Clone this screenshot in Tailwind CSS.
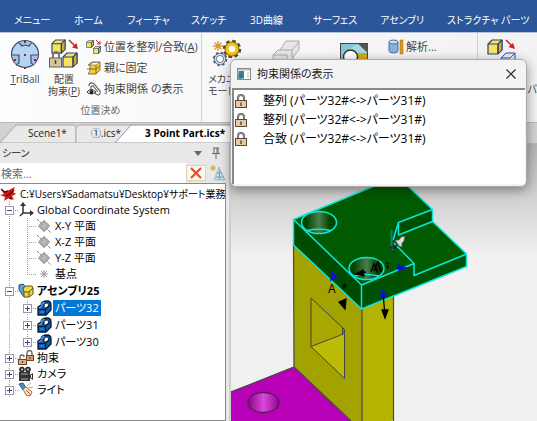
<!DOCTYPE html>
<html lang="ja" class="h-full">
<head>
  <meta charset="UTF-8" />
  <meta name="viewport" content="width=device-width, initial-scale=1.0" />
  <title>3 Point Part.ics</title>
  <script src="https://cdn.jsdelivr.net/npm/@tailwindcss/browser@4"></script>
</head>
<body class="relative flex h-screen flex-col overflow-hidden bg-[#f0f0f0] font-['Open_Sans','Noto_Sans_CJK_JP',sans-serif] text-[11px] leading-4 text-[#222] [font-feature-settings:'palt']">

  <!-- Shared icons -->
  <svg class="hidden">
    <symbol id="cube" viewBox="0 0 16 16">
      <path d="M1 5L5 1H15V11L11 15H1Z" fill="#f7e45c" stroke="#28407c" stroke-width="1.2" />
      <path d="M11 5L15 1V11L11 15Z" fill="#cfae22" stroke="#28407c" stroke-width="1" />
      <path d="M1 5H11V15M11 5L15 1" fill="none" stroke="#28407c" stroke-width="1.2" />
    </symbol>
    <symbol id="lock" viewBox="0 0 12 14">
      <path d="M3 7V4a3 3 0 0 1 6 0V7" fill="none" stroke="#5c5c5c" stroke-width="2" />
      <path d="M3 7V4a3 3 0 0 1 6 0V7" fill="none" stroke="#bbb" stroke-width=".6" />
      <rect x=".5" y="6.5" width="11" height="7" fill="#e8c9a0" stroke="#57493b" />
      <path d="M6 8.500V12" stroke="#4a3c2c" stroke-width="1.300" />
    </symbol>
    <symbol id="plane" viewBox="0 0 16 16">
      <path d="M1 1L15 15" stroke="#777" stroke-dasharray="3 1" />
      <path d="M8 2L14 8L8 14L2 8Z" fill="#a8a8a8" stroke="#b5b5b5" />
      <path d="M5 8H11M8 5V11" stroke="#c4c4c4" />
    </symbol>
    <symbol id="part" viewBox="0 0 16 16">
      <path d="M2 7L5 5C5 2 8 1 11 1C14 1 15 3 15 5V10L10 15H2Z" fill="#0f57a8" stroke="#061a33" stroke-width="1.300" />
      <path d="M8 6C8 4 9 3 11 3C12 3 12.500 4 12.500 6L10 8H8Z" fill="#fff" stroke="#061a33" />
      <path d="M3 8L6 6M5 5L8 2" fill="none" stroke="#59a7ee" stroke-width="1.500" />
      <path d="M2 9.500H9.500V15M9.500 9.500L15 5" fill="none" stroke="#061a33" />
      <path d="M4 12H8" stroke="#2f86d8" stroke-width="1.500" />
    </symbol>
    <symbol id="plus" viewBox="0 0 18 16">
      <path d="M9.500 0V16M13 8.500H18" stroke="#999" stroke-dasharray="1 1" />
      <rect x="5.500" y="4.500" width="8" height="8" fill="#fff" stroke="#999" />
      <path d="M7 8.500H12M9.500 6V11" stroke="#2b4b9b" />
    </symbol>
    <symbol id="minus" viewBox="0 0 18 16">
      <path d="M9.500 0V16M13 8.500H18" stroke="#999" stroke-dasharray="1 1" />
      <rect x="5.500" y="4.500" width="8" height="8" fill="#fff" stroke="#999" />
      <path d="M7 8.500H12" stroke="#2b4b9b" />
    </symbol>
    <symbol id="trunk" viewBox="0 0 18 16">
      <path d="M9.500 0V16" stroke="#999" stroke-dasharray="1 1" />
    </symbol>
    <symbol id="branch" viewBox="0 0 18 16">
      <path d="M9.500 0V16M9 8.500H18" stroke="#999" stroke-dasharray="1 1" />
    </symbol>
  </svg>

  <!-- Menu bar -->
  <nav class="grid h-8 shrink-0 grid-cols-[60fr_53fr_64fr_59fr_63fr_67fr_67fr_90fr] items-end whitespace-nowrap bg-[#2b579a] pb-1 pl-3.5 text-[10px] text-white">
    <a href="#">メニュー</a>
    <a href="#">ホーム</a>
    <a href="#">フィーチャ</a>
    <a href="#">スケッチ</a>
    <a href="#">3D曲線</a>
    <a href="#">サーフェス</a>
    <a href="#">アセンブリ</a>
    <a href="#">ストラクチャ パーツ</a>
  </nav>

  <!-- Ribbon -->
  <div class="flex h-[90px] shrink-0 border-t border-[#b9c3d6] bg-linear-to-r from-[#fdfdfd] to-[#f2f2f2] text-[#444]">
    <section class="flex w-[202px] shrink-0 flex-col border-r border-[#d0d0d0]">
      <div class="flex h-[69px] gap-1 pt-1">
        <button class="flex w-[42px] flex-col items-center pl-2 text-[10px]">
          <svg class="size-8 shrink-0" viewBox="0 0 32 32">
            <circle cx="16" cy="17" r="13.500" fill="#b5d3f2" stroke="#3f4f63" stroke-width="1.200" />
            <path d="M9 5L13 9L16 8L20 9L23 5M3 18H10V26L7 28M29 18H22V26L25 28" fill="#a0c2e8" stroke="#3f4f63" stroke-width="1.200" />
            <path d="M15 4h2v2h-2zM15 17h2v2h-2zM5 22h2v2h-2zM25 22h2v2h-2zM15 30h2v2h-2z" fill="#b01828" />
          </svg>
          <span class="pt-0.5"><u>T</u>riBall</span>
        </button>
        <button class="flex w-9 flex-col items-center text-[10px] leading-3">
          <svg class="size-8 shrink-0" viewBox="0 0 32 32">
            <use href="#cube" x="3" y="2" width="15" height="15" />
            <use href="#cube" x="14" y="15" width="16" height="16" />
            <path d="M21 3L28 10" stroke="#d02020" stroke-width="1.500" />
            <path d="M30 12L24 10.500L28.500 6Z" fill="#d02020" />
            <path d="M5 22V18a3 3 0 0 1 6 0v4" fill="none" stroke="#777" stroke-width="2" />
            <rect x="1.500" y="21" width="12" height="9" fill="#d6c5a0" stroke="#6b5f48" />
            <path d="M7.500 23V27" stroke="#51452f" stroke-width="1.500" />
          </svg>
          <span class="whitespace-nowrap pt-1">配置</span>
          <span class="whitespace-nowrap">拘束(<u>P</u>)</span>
        </button>
        <div class="flex flex-col gap-[5px] whitespace-nowrap pt-0.5 text-[11px]">
          <button class="flex items-center gap-0.5">
            <svg class="size-4" viewBox="0 0 16 16">
              <use href="#cube" x="0" y="1" width="8" height="8" />
              <use href="#cube" x="7" y="7" width="8" height="8" />
              <path d="M10 1L14 5M14 2V5H11" fill="none" stroke="#d02020" />
            </svg>
            <span>位置を整列/合致(<u>A</u>)</span>
          </button>
          <button class="flex items-center gap-0.5">
            <svg class="size-4" viewBox="0 0 16 16">
              <path d="M2 5L6 2H14V10L10 14H2L4 11V5Z" fill="#f4cf35" stroke="#8d7434" />
              <path d="M4 5L7 2.500H14L10 5Z" fill="#fff" stroke="#777" stroke-width=".7" />
              <path d="M1 9H10M10 5V14M10 9L14 6" fill="none" stroke="#8a6510" />
            </svg>
            <span>親に固定</span>
          </button>
          <button class="flex items-center gap-0.5">
            <svg class="size-4" viewBox="0 0 16 16">
              <path d="M3 5C3 1 7 1 9 4L14 10C15 13 13 15 10 13L5 8C4 5 7 4 8 6L12 11" fill="none" stroke="#666" stroke-width="1.200" />
              <path d="M1 11Q5 6 10 11Q5 15 1 11Z" fill="#fff" stroke="#333" />
              <circle cx="5.500" cy="11" r="2" fill="#222" />
            </svg>
            <span>拘束関係 の表示</span>
          </button>
        </div>
      </div>
      <h2 class="text-center text-[10px] text-[#666]">位置決め</h2>
    </section>

    <section class="flex w-[276px] shrink-0 items-start border-r border-[#d0d0d0] pt-1">
      <button class="flex w-[58px] flex-col whitespace-nowrap pl-1.5 text-left text-[10px] leading-3">
        <svg class="ml-1 size-8 shrink-0" viewBox="0 0 32 32">
          <path d="M6 4V14M1 9H11M2.500 5.500L9.500 12.500M9.500 5.500L2.500 12.500" stroke="#dc9928" stroke-width="1.300" />
          <circle cx="20" cy="12" r="7.500" fill="none" stroke="#5f4d13" stroke-width="3.500" stroke-dasharray="3.300 2.590" />
          <circle cx="20" cy="12" r="5" fill="#fff" stroke="#5f4d13" stroke-width="5" />
          <circle cx="20" cy="12" r="5" fill="#fff" stroke="#f0c21a" stroke-width="3.500" />
          <circle cx="8" cy="22" r="6" fill="none" stroke="#566178" stroke-width="2.500" stroke-dasharray="2.500 2.200" />
          <circle cx="8" cy="22" r="4.500" fill="#fff" stroke="#566178" stroke-width="3" />
          <circle cx="8" cy="22" r="4.500" fill="none" stroke="#d4ddea" stroke-width="1.500" />
        </svg>
        <span class="pt-1">メカニ</span>
        <span>モード</span>
      </button>
      <button class="w-[76px] pl-3 text-left" aria-label="シェル">
        <svg class="size-8" viewBox="0 0 32 32">
          <path d="M1 18L6 13H8L14 4H27V13L21 20V25H1Z" fill="#e6e6e6" stroke="#aaa" />
          <path d="M8 13H20L27 5M20 13V20M1 18H15V25" fill="none" stroke="#aaa" />
        </svg>
      </button>
      <button class="w-12 pl-1 text-left" aria-label="断面">
        <svg class="h-8 w-7" viewBox="0 0 28 32">
          <rect x=".500" y="6.500" width="27" height="25" fill="#86c5d5" stroke="#444" />
          <path d="M18 7H28V16Z" fill="#555" />
          <path d="M18 16H27V31H18Z" fill="#d3a91e" />
          <path d="M1 16L18 7L27 16" fill="#a8d8e2" />
          <circle cx="10.500" cy="20" r="7" fill="#fff" stroke="#333" stroke-width="1.500" />
        </svg>
      </button>
      <button class="flex items-center gap-0.5 pl-1 pt-0.5 text-[11px]">
        <svg class="size-4" viewBox="0 0 16 16">
          <path d="M1 3V12a4.500 2 0 0 0 9 0V3" fill="#86b2dc" stroke="#4e6f94" />
          <ellipse cx="5.500" cy="3" rx="4.500" ry="2" fill="#c9def2" stroke="#4e6f94" />
          <rect x="12" y="1" width="3" height="14" fill="#d99a20" stroke="#9b6a10" stroke-width=".5" />
        </svg>
        <span>解析...</span>
      </button>
    </section>

    <section class="min-w-0 flex-1 overflow-hidden pl-2 pt-1">
      <button class="flex w-full flex-col whitespace-nowrap text-[10px] leading-3">
        <svg class="size-8 shrink-0" viewBox="0 0 32 32">
          <use href="#cube" x="1" y="2" width="16" height="16" />
          <path d="M15 21L20 16H29V26L25 30H15Z M15 21H24L29 16" fill="#e4e8ff" stroke="#354ba0" />
          <path d="M20 3L26 9" stroke="#d02020" stroke-width="1.500" />
          <path d="M29 12L22.500 10L27 6Z" fill="#d02020" />
        </svg>
        <span class="self-end pt-3.5">パ</span>
      </button>
    </section>
  </div>

  <!-- Document tabs -->
  <div class="relative flex h-[21px] shrink-0 border-t border-[#b8b8b8] bg-[#d2d2d2]">
    <svg class="absolute left-0 top-0 h-5 w-60" viewBox="0 0 240 20">
      <path d="M0 20L16 2H74L76 4V20Z" fill="#e9e9e9" stroke="#aaa" />
      <path d="M76 20V5L79 2H133L116 20Z" fill="#e9e9e9" stroke="#aaa" />
      <path d="M115 20L131 2H240V20Z" fill="#fff" stroke="#999" />
    </svg>
    <div class="relative flex items-center gap-6 pl-7 text-[10px]">
      <a href="#">Scene1*</a>
      <a href="#">①.ics*</a>
      <a href="#" class="font-bold text-black">3 Point Part.ics*</a>
    </div>
  </div>

  <div class="flex min-h-0 flex-1">
    <!-- Scene browser -->
    <aside class="flex w-[231px] shrink-0 flex-col border-r-2 border-[#cfcfcf] bg-[#e8e8e8] pr-[3px]">
      <header class="flex h-5 shrink-0 items-center justify-between pl-0.5 pr-1">
        <h2 class="text-[10px]">シーン</h2>
        <div class="flex items-center gap-2">
          <button aria-label="メニュー">
            <svg class="h-3 w-2" viewBox="0 0 8 12"><path d="M0 4H8L4 9Z" fill="#666" /></svg>
          </button>
          <button aria-label="固定">
            <svg class="h-3 w-3" viewBox="0 0 12 12"><path d="M3 1H9M4 1V6M8 1V6M7 1V6M2 6.500H10M6 7V12" fill="none" stroke="#666" /></svg>
          </button>
        </div>
      </header>
      <div class="flex h-5 shrink-0 items-center">
        <input type="text" aria-label="検索" placeholder="検索..." class="h-full min-w-0 flex-1 bg-white px-px text-[11px] placeholder:text-[#666]" />
        <button aria-label="クリア" class="flex h-4 w-5 items-center justify-center border border-[#ddd3b0] bg-[#fbf7ea]">
          <svg class="size-3" viewBox="0 0 12 12"><path d="M1 1L11 11M11 1L1 11" stroke="#e84430" stroke-width="2" /></svg>
        </button>
        <button aria-label="フィルタ" class="pl-1">
          <svg class="size-4" viewBox="0 0 16 16">
            <path d="M3 0V6M0 3H6M1 1L5 5M5 1L1 5" stroke="#d6a93c" />
            <path d="M9 2L15 15H4Z" fill="#c6dce5" stroke="#8eabb9" stroke-dasharray="2 1" />
            <path d="M7 8H12M6 12H14M9.500 5V15" stroke="#7ba0b2" />
          </svg>
        </button>
      </div>

      <ul class="min-h-0 flex-1 overflow-hidden whitespace-nowrap border border-l-0 border-[#888] bg-white pt-0.5 text-black">
        <li>
          <div class="flex h-4 items-center gap-1">
            <svg class="size-4 shrink-0" viewBox="0 0 16 16">
              <path d="M1 4L5 6L9 4L15 1L13 6L16 8L12 10L14 14L9 12L4 15L5 11L0 9L4 8Z" fill="#d81616" />
              <path d="M1 3L5 6L8 5M6 10L10 8L14 4M9 12L12 13" fill="none" stroke="#5e0808" stroke-width="1.500" />
            </svg>
            <span class="text-[10px]">C:¥Users¥Sadamatsu¥Desktop¥サポート業務</span>
          </div>
        </li>
        <li>
          <div class="flex h-4 items-center gap-[3px]">
            <span class="flex">
              <button aria-label="折りたたむ" class="h-4 w-[18px]"><svg class="h-4 w-[18px]"><use href="#minus" /></svg></button>
              <svg class="size-4" viewBox="0 0 16 16">
                <path d="M5 2V11H14M5 11L2 14" fill="none" stroke="#333" stroke-width="1.500" />
                <path d="M2 4L5 0L8 4ZM12 8L16 11L12 14Z" fill="#333" />
              </svg>
            </span>
            <span>Global Coordinate System</span>
          </div>
          <ul>
            <li class="flex h-4 items-center">
              <svg class="h-4 w-[18px]"><use href="#trunk" /></svg><svg class="h-4 w-[18px]"><use href="#branch" /></svg>
              <svg class="size-4"><use href="#plane" /></svg><span class="pl-[3px]">X-Y 平面</span>
            </li>
            <li class="flex h-4 items-center">
              <svg class="h-4 w-[18px]"><use href="#trunk" /></svg><svg class="h-4 w-[18px]"><use href="#branch" /></svg>
              <svg class="size-4"><use href="#plane" /></svg><span class="pl-[3px]">X-Z 平面</span>
            </li>
            <li class="flex h-4 items-center">
              <svg class="h-4 w-[18px]"><use href="#trunk" /></svg><svg class="h-4 w-[18px]"><use href="#branch" /></svg>
              <svg class="size-4"><use href="#plane" /></svg><span class="pl-[3px]">Y-Z 平面</span>
            </li>
            <li class="flex h-4 items-center">
              <svg class="h-4 w-[18px]"><use href="#trunk" /></svg>
              <svg class="h-4 w-[18px]" viewBox="0 0 18 16"><path d="M9.500 0V9M9 8.500H18" stroke="#999" stroke-dasharray="1 1" /></svg>
              <svg class="size-4" viewBox="0 0 16 16"><path d="M8 4V12M4 8H12M5 5L11 11M11 5L5 11" stroke="#999" /></svg>
              <span class="pl-[3px]">基点</span>
            </li>
          </ul>
        </li>
        <li class="pt-px">
          <div class="flex h-4 items-center gap-[3px]">
            <span class="flex">
              <button aria-label="折りたたむ" class="h-4 w-[18px]"><svg class="h-4 w-[18px]"><use href="#minus" /></svg></button>
              <svg class="size-4" viewBox="0 0 16 16">
                <path d="M1 2L5 1L9 5V13L6 14L1 7Z" fill="#5aa0d8" stroke="#244e7a" />
                <path d="M5 5L8 3H14L15 5V11L11 14H6V9Z" fill="#f2d83c" stroke="#5e5312" />
                <path d="M6 9H11V14M11 9L15 5" fill="none" stroke="#5e5312" />
              </svg>
            </span>
            <span class="font-bold">アセンブリ25</span>
          </div>
          <ul>
            <li class="flex h-[17px] items-center">
              <svg class="h-[17px] w-[18px]"><use href="#trunk" /></svg>
              <button aria-label="展開" class="h-4 w-[18px]"><svg class="h-4 w-[18px]"><use href="#plus" /></svg></button>
              <svg class="size-4"><use href="#part" /></svg><span class="ml-px bg-[#0078d7] px-0.5 text-white">パーツ32</span>
            </li>
            <li class="flex h-[17px] items-center">
              <svg class="h-[17px] w-[18px]"><use href="#trunk" /></svg>
              <button aria-label="展開" class="h-4 w-[18px]"><svg class="h-4 w-[18px]"><use href="#plus" /></svg></button>
              <svg class="size-4"><use href="#part" /></svg><span class="ml-px px-0.5">パーツ31</span>
            </li>
            <li class="flex h-[17px] items-center">
              <svg class="h-[17px] w-[18px]"><use href="#trunk" /></svg>
              <button aria-label="展開" class="h-4 w-[18px]"><svg class="h-4 w-[18px]"><use href="#plus" /></svg></button>
              <svg class="size-4"><use href="#part" /></svg><span class="ml-px px-0.5">パーツ30</span>
            </li>
          </ul>
        </li>
        <li class="flex h-4 items-center gap-[3px]">
          <span class="flex">
            <button aria-label="展開" class="h-4 w-[18px]"><svg class="h-4 w-[18px]"><use href="#plus" /></svg></button>
            <svg class="size-4" viewBox="0 0 16 16">
              <path d="M9 6V3a2 2 0 0 1 5 0V6M2 10V7a2 2 0 0 1 4 0" fill="none" stroke="#666" stroke-width="1.300" />
              <rect x="8.500" y="5.500" width="7" height="5" fill="#d99a72" stroke="#70432c" />
              <rect x=".500" y="9.500" width="8" height="5" fill="#e2ab82" stroke="#70432c" />
              <path d="M4.500 11V13M12 7V9" stroke="#50301f" />
            </svg>
          </span>
          <span>拘束</span>
        </li>
        <li class="flex h-4 items-center gap-[3px]">
          <span class="flex">
            <button aria-label="展開" class="h-4 w-[18px]"><svg class="h-4 w-[18px]"><use href="#plus" /></svg></button>
            <svg class="size-4" viewBox="0 0 16 16">
              <circle cx="4" cy="3.500" r="2" fill="#aaa" stroke="#222" stroke-width="1.600" />
              <circle cx="10" cy="3.500" r="2" fill="#aaa" stroke="#222" stroke-width="1.600" />
              <path d="M1 6H12V9L15 7V14L12 12V15H1Z" fill="#333" />
              <path d="M3 8H10M3 13H10" stroke="#aaa" />
              <path d="M13.500 9V12" stroke="#eee" />
            </svg>
          </span>
          <span>カメラ</span>
        </li>
        <li class="flex h-4 items-center gap-[3px]">
          <span class="flex">
            <button aria-label="展開" class="h-4 w-[18px]"><svg class="h-4 w-[18px]"><use href="#plus" /></svg></button>
            <svg class="size-4" viewBox="0 0 16 16">
              <path d="M1 2L5 1L8 6L5 8Z" fill="#4d8cc4" stroke="#295784" />
              <path d="M5 7L8 5L14 10L12 14L8 13Z" fill="#fae5b8" stroke="#8b7560" />
              <path d="M8 8L13 13" stroke="#d34434" />
              <path d="M9 4L13 1M10 6L15 5" stroke="#d0ad48" />
            </svg>
          </span>
          <span>ライト</span>
        </li>
      </ul>
    </aside>

    <!-- 3D view -->
    <main class="min-w-0 flex-1 bg-linear-to-b from-[#b4b4b4] to-[#f0f0f0] to-40%">
      <svg class="h-full w-full" viewBox="231 143 306 278" preserveAspectRatio="xMinYMin slice">
        <defs>
          <linearGradient id="bore">
            <stop offset=".15" stop-color="#004600" />
            <stop offset=".5" stop-color="#4d7d4d" />
            <stop offset=".8" stop-color="#004600" />
          </linearGradient>
          <linearGradient id="pinkBore">
            <stop offset="0" stop-color="#8c008c" />
            <stop offset=".5" stop-color="#dc48dc" />
            <stop offset="1" stop-color="#960096" />
          </linearGradient>
        </defs>
        <!-- base plate -->
        <path d="M231 392L294 367L351 421H231Z" fill="#b900b9" />
        <path d="M231 392L294 367L351 421" fill="none" stroke="#444" stroke-width="1.200" />
        <ellipse cx="263.500" cy="402.500" rx="15.500" ry="10" fill="url(#pinkBore)" stroke="#4d2450" stroke-width="1.300" />
        <!-- column -->
        <path d="M293.500 244L362 309V421H351L294 367Z" fill="#a2a200" />
        <path d="M362 308L393.500 296V420L391 421H362Z" fill="#b4b400" />
        <path d="M293.500 244L294 367L351 421M362 308V421M393.500 296V421" fill="none" stroke="#4a4a42" stroke-width="1.200" />
        <path d="M311 298L344.500 329.500V378.500L311 346.500Z" fill="#a8a800" />
        <path d="M311 346.500L344.500 333.500V378.500Z" fill="#bcbc08" />
        <path d="M342.500 328V334L344.500 333V329Z" fill="#777" />
        <path d="M311 298L344.500 329.500V378.500L311 346.500ZM311 346.500L344.500 333.500M342.500 328V334" fill="none" stroke="#444" />
        <!-- selected top part -->
        <path d="M293.500 219.500L390 179.500H401L432.500 209.500V221.500L466.500 254L414 275.500V263.500L361.500 285Z" fill="#005a00" />
        <path d="M293.500 219.500L361.500 285V309L293.500 245Z" fill="#004b00" />
        <path d="M361.500 285L414 263.500V275.500L466.500 254V266.500L361.500 309Z" fill="#005200" />
        <path d="M398.500 222.500L432.500 209.500V221.500L398.500 235L394 243Z" fill="#004d00" />
        <g fill="none" stroke="#08e8dd" stroke-width="1.500" stroke-linejoin="round">
          <path d="M390 179.500L293.500 219.500V245L361.500 309L466.500 266.500V254L432.500 221.500V209.500L401 179.500" />
          <path d="M293.500 219.500L361.500 285V309M361.500 285L414 263.500V275.500L466.500 254" />
          <path d="M432.500 209.500L398.500 222.500V235L432.500 221.500M398.500 222.500L393 240M394 243L414 263.500" />
          <ellipse cx="319" cy="222.500" rx="17.500" ry="11" fill="url(#bore)" />
          <path d="M307 230.500Q319 228 331 230.500" />
          <ellipse cx="366.500" cy="268.500" rx="17.500" ry="11" fill="url(#bore)" />
          <path d="M354 276Q366 273 379 276" />
        </g>
        <!-- constraint arrows -->
        <g stroke="#000" stroke-width="1.300">
          <path d="M383 293L385 316M357 274L366 272M397 268L403 267" />
          <path d="M385 318L382 310L388 310ZM356 274L363 270L364 276ZM339 302L346 299L345 309Z" />
        </g>
        <path d="M383 288L379.500 297H386.500ZM408 268L398 264V271ZM332 271L330 281L338 278Z" fill="#0b12d0" />
        <path d="M371 272L374 264L378 273M374 271L378 262L381 272" fill="none" stroke="#000" stroke-width="1.500" />
        <text x="328" y="293" font-size="12">A</text>
        <text x="341" y="293" font-size="12">*</text>
        <text x="385" y="269" font-size="10">‡</text>
        <!-- pin -->
        <path d="M391.500 230V246" stroke="#087c83" stroke-width="2" />
        <circle cx="393" cy="249" r="2.500" fill="#146273" stroke="#082a30" />
        <path d="M393 249L398 244" stroke="#222" stroke-width="1.500" />
        <path d="M395 240L399 240L401 237L405 236L404 241L402 243L402 247L399 246Z" fill="#ddd" stroke="#555" stroke-width=".8" />
      </svg>
    </main>
  </div>

  <!-- Constraint list dialog -->
  <div role="dialog" aria-labelledby="dialog-title" class="absolute left-[230px] right-[10px] top-[59px] flex h-32 flex-col rounded-md border border-[#aaa] bg-[#f3f3f3] shadow-[0_3px_12px_rgba(0,0,0,0.4)]">
    <header class="flex h-7 shrink-0 items-center gap-1.5 pl-1.5 pr-2.5">
      <svg class="h-3 w-3.5" viewBox="0 0 14 12">
        <rect x=".500" y=".500" width="13" height="11" fill="#fff" stroke="#888" />
        <path d="M1 1H13V2.500H1Z" fill="#bbb" />
        <path d="M1.500 3H7V10.500H1.500Z" fill="#2c8b78" />
        <path d="M1.500 6H5V10.500H1.500Z" fill="#3c6fa9" />
        <path d="M10 4H12V10H10Z" fill="#ddd" />
      </svg>
      <h2 id="dialog-title" class="flex-1 text-[11px]">拘束関係の表示</h2>
      <button aria-label="閉じる">
        <svg class="size-2.5" viewBox="0 0 10 10"><path d="M.500 .500L9.500 9.500M9.500 .500L.500 9.500" stroke="#222" stroke-width="1.200" /></svg>
      </button>
    </header>
    <ul class="mx-px mb-0.5 flex-1 border-l-2 border-t-2 border-[#888] bg-white pt-px text-[12px] text-black">
      <li class="flex h-[19px] items-center gap-4 pl-px"><svg class="h-3.5 w-3"><use href="#lock" /></svg>整列 (パーツ32#&lt;-&gt;パーツ31#)</li>
      <li class="flex h-[19px] items-center gap-4 pl-px"><svg class="h-3.5 w-3"><use href="#lock" /></svg>整列 (パーツ32#&lt;-&gt;パーツ31#)</li>
      <li class="flex h-[19px] items-center gap-4 pl-px"><svg class="h-3.5 w-3"><use href="#lock" /></svg>合致 (パーツ32#&lt;-&gt;パーツ31#)</li>
    </ul>
  </div>
</body>
</html>
